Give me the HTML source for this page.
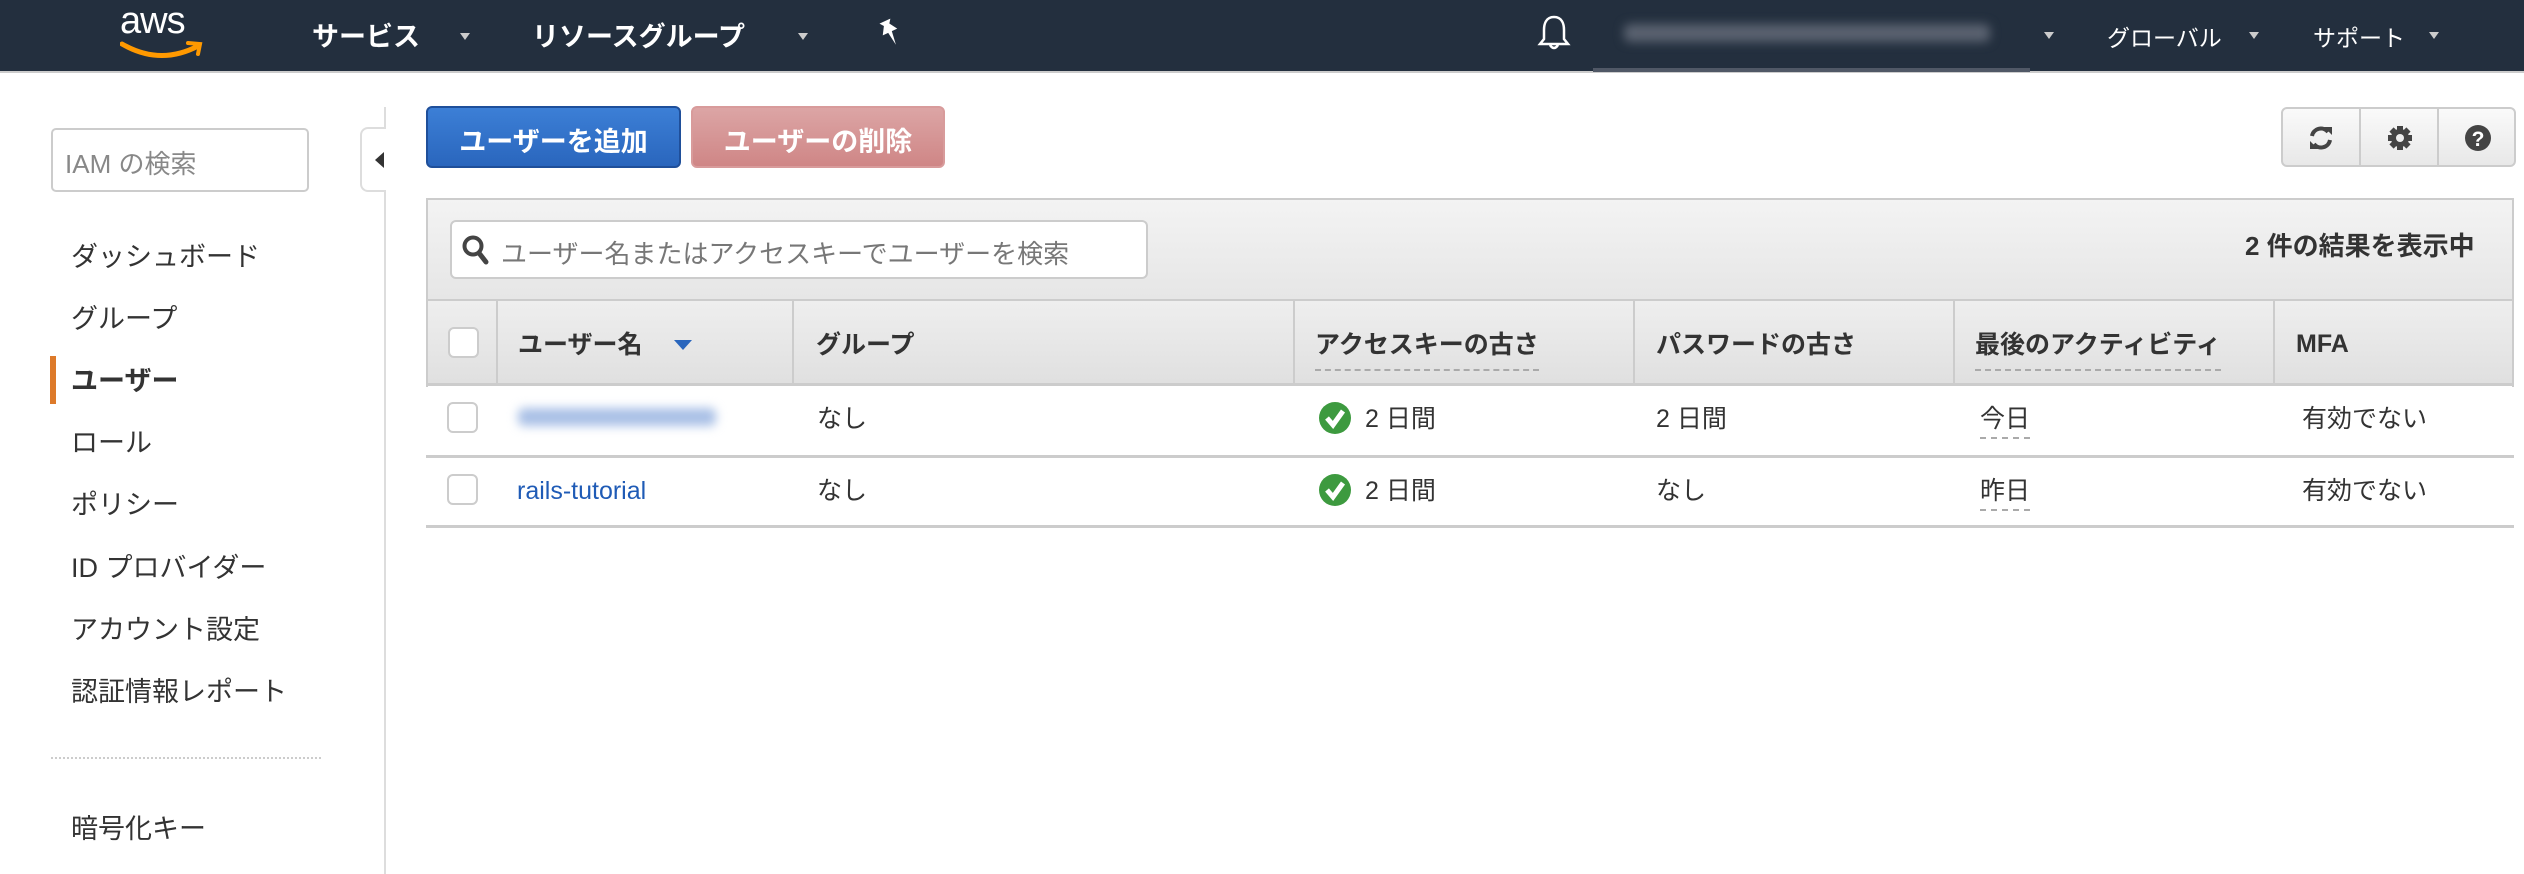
<!DOCTYPE html>
<html><head><meta charset="utf-8"><style>
*{box-sizing:border-box;margin:0;padding:0}
body{width:2524px;height:874px;position:relative;overflow:hidden;background:#fff;font-family:"Liberation Sans","Noto Sans CJK JP",sans-serif;color:#333}
.a{position:absolute;white-space:nowrap}
.nav{left:0;top:0;width:2524px;height:73px;background:#232f3e;border-bottom:2px solid #ccc}
.nt{color:#fff;font-size:27px;font-weight:bold;top:15px}
.nt2{color:#fff;font-size:23px;top:19px}
.car{width:0;height:0;border-left:5px solid transparent;border-right:5px solid transparent;border-top:7px solid #ccc}
.side{font-size:27px;color:#333;left:71px}
.th{font-size:25px;font-weight:bold;color:#333;top:325px}
.td{font-size:25px;color:#333}
.cb{width:31px;height:31px;border:2px solid #ccc;border-radius:6px;background:#fff}
.dot{border-bottom:2px dashed #aaa}
</style></head><body>
<div class="a nav"></div>
<div class="a" style="left:120px;top:0px;color:#fff;font-size:38px;font-family:'Liberation Sans',sans-serif;letter-spacing:-1px">aws</div>
<svg class="a" style="left:120px;top:40px" width="84" height="20"><path d="M2 4 Q40 26 78 6" stroke="#f90" stroke-width="5" fill="none" stroke-linecap="round"/><path d="M68 3 L80 4 L78 14" stroke="#f90" stroke-width="4" fill="none" stroke-linecap="round"/></svg>
<div class="a nt" style="left:312px">サービス</div><div class="a car" style="left:460px;top:33px"></div>
<div class="a nt" style="left:532px">リソースグループ</div><div class="a car" style="left:798px;top:33px"></div>
<svg class="a" style="left:876px;top:18px" width="28" height="30"><path d="M8 2 L20 2 L17 6 L22 14 L16 14 L14 28 L12 14 L6 14 L11 6 Z" fill="#fff" transform="rotate(-25 14 14)"/></svg>
<svg class="a" style="left:1536px;top:14px" width="36" height="38"><path d="M18 3 C10 3 8 10 8 16 L8 25 L4 30 L32 30 L28 25 L28 16 C28 10 26 3 18 3 Z M14 31 Q18 37 22 31" stroke="#fff" stroke-width="2.5" fill="none"/></svg>
<div class="a" style="left:1624px;top:24px;width:366px;height:18px;background:#5a6270;filter:blur(5px);border-radius:6px"></div>
<div class="a" style="left:1593px;top:68px;width:437px;height:4px;background:#505866"></div>
<div class="a car" style="left:2044px;top:32px"></div>
<div class="a nt2" style="left:2107px">グローバル</div><div class="a car" style="left:2249px;top:32px"></div>
<div class="a nt2" style="left:2313px">サポート</div><div class="a car" style="left:2429px;top:32px"></div>

<div class="a" style="left:51px;top:128px;width:258px;height:64px;border:2px solid #ccc;border-radius:5px;font-size:26px;color:#888;padding:14px 0 0 12px">IAM の検索</div>
<div class="a" style="left:384px;top:107px;width:2px;height:767px;background:#ddd"></div>
<div class="a" style="left:360px;top:127px;width:26px;height:65px;border:2px solid #ddd;border-right:none;border-radius:8px 0 0 8px;background:#fff"></div>
<div class="a" style="left:375px;top:152px;width:0;height:0;border-top:8px solid transparent;border-bottom:8px solid transparent;border-right:9px solid #333"></div>
<div class="a side" style="top:235px">ダッシュボード</div>
<div class="a side" style="top:297px">グループ</div>
<div class="a" style="left:50px;top:356px;width:6px;height:48px;background:#dd7a2a"></div>
<div class="a side" style="top:359px;font-weight:bold">ユーザー</div>
<div class="a side" style="top:421px">ロール</div>
<div class="a side" style="top:483px">ポリシー</div>
<div class="a side" style="top:546px">ID プロバイダー</div>
<div class="a side" style="top:608px">アカウント設定</div>
<div class="a side" style="top:670px">認証情報レポート</div>
<div class="a" style="left:51px;top:757px;width:270px;border-top:2px dotted #ccc"></div>
<div class="a side" style="top:807px">暗号化キー</div>

<div class="a" style="left:426px;top:106px;width:255px;height:62px;border:2px solid #1f4f9a;border-radius:6px;background:linear-gradient(#3c7fd6,#2a66bd);color:#fff;font-size:27px;font-weight:bold;text-align:center;padding-top:12px">ユーザーを追加</div>
<div class="a" style="left:691px;top:106px;width:254px;height:62px;border:2px solid #d89b9b;border-radius:6px;background:linear-gradient(#dca5a5,#cf8686);color:#fff;font-size:27px;font-weight:bold;text-align:center;padding-top:12px">ユーザーの削除</div>

<div class="a" style="left:2281px;top:107px;width:235px;height:60px;border:2px solid #ccc;border-radius:6px;background:linear-gradient(#fafafa,#e8e8e8)"></div>
<div class="a" style="left:2359px;top:107px;width:2px;height:60px;background:#ccc"></div>
<div class="a" style="left:2437px;top:107px;width:2px;height:60px;background:#ccc"></div>
<svg class="a" style="left:2306px;top:123px" width="30" height="30"><path d="M6 13 A9 9 0 0 1 22 9 M24 17 A9 9 0 0 1 8 21" stroke="#444" stroke-width="4" fill="none"/><path d="M18 4 L26 4 L26 12 Z M12 26 L4 26 L4 18 Z" fill="#444"/></svg>
<svg class="a" style="left:2385px;top:123px" width="30" height="30"><g fill="#444"><circle cx="15" cy="15" r="9"/><rect x="12" y="3" width="6" height="24"/><rect x="12" y="3" width="6" height="24" transform="rotate(45 15 15)"/><rect x="12" y="3" width="6" height="24" transform="rotate(90 15 15)"/><rect x="12" y="3" width="6" height="24" transform="rotate(135 15 15)"/></g><circle cx="15" cy="15" r="4" fill="#eee"/></svg>
<svg class="a" style="left:2463px;top:123px" width="30" height="30"><circle cx="15" cy="15" r="13" fill="#444"/><text x="15" y="23" font-size="21" font-weight="bold" fill="#fff" text-anchor="middle" font-family="Liberation Sans">?</text></svg>

<div class="a" style="left:426px;top:198px;width:2088px;height:189px;border:2px solid #ccc;border-bottom:none"></div>
<div class="a" style="left:428px;top:200px;width:2084px;height:101px;background:linear-gradient(#f3f3f3,#e6e6e6);border-bottom:2px solid #ccc"></div>
<div class="a" style="left:450px;top:220px;width:698px;height:59px;background:#fff;border:2px solid #ccc;border-radius:6px"></div>
<svg class="a" style="left:461px;top:234px" width="28" height="32"><circle cx="12" cy="12" r="8.5" stroke="#444" stroke-width="4" fill="none"/><path d="M18 19 L25 28" stroke="#444" stroke-width="5" stroke-linecap="round"/></svg>
<div class="a" style="left:501px;top:234px;font-size:26px;color:#777">ユーザー名またはアクセスキーでユーザーを検索</div>
<div class="a" style="left:2245px;top:226px;font-size:26px;font-weight:bold;color:#333">2 件の結果を表示中</div>

<div class="a" style="left:428px;top:301px;width:2084px;height:85px;background:linear-gradient(#eeeeee,#e0e0e0);border-bottom:3px solid #ccc"></div>
<div class="a" style="left:496px;top:301px;width:2px;height:82px;background:#ccc"></div>
<div class="a" style="left:792px;top:301px;width:2px;height:82px;background:#ccc"></div>
<div class="a" style="left:1293px;top:301px;width:2px;height:82px;background:#ccc"></div>
<div class="a" style="left:1633px;top:301px;width:2px;height:82px;background:#ccc"></div>
<div class="a" style="left:1953px;top:301px;width:2px;height:82px;background:#ccc"></div>
<div class="a" style="left:2273px;top:301px;width:2px;height:82px;background:#ccc"></div>
<div class="a cb" style="left:448px;top:327px"></div>
<div class="a th" style="left:518px">ユーザー名</div>
<div class="a" style="left:674px;top:340px;width:0;height:0;border-left:9px solid transparent;border-right:9px solid transparent;border-top:10px solid #2a66bd"></div>
<div class="a th" style="left:816px">グループ</div>
<div class="a th dot" style="left:1315px;padding-bottom:8px">アクセスキーの古さ</div>
<div class="a th" style="left:1656px">パスワードの古さ</div>
<div class="a th dot" style="left:1975px;padding-bottom:8px">最後のアクティビティ</div>
<div class="a th" style="left:2296px;top:330px">MFA</div>

<div class="a" style="left:426px;top:455px;width:2088px;height:3px;background:#ccc"></div>
<div class="a" style="left:426px;top:525px;width:2088px;height:3px;background:#ccc"></div>
<div class="a cb" style="left:447px;top:402px"></div>
<div class="a cb" style="left:447px;top:474px"></div>
<div class="a" style="left:518px;top:408px;width:198px;height:18px;background:#a9c0e6;filter:blur(5px);border-radius:6px"></div>
<div class="a td" style="left:517px;top:477px;color:#1f5bb6">rails-tutorial</div>
<div class="a td" style="left:817px;top:399px">なし</div>
<div class="a td" style="left:817px;top:471px">なし</div>
<svg class="a" style="left:1318px;top:401px" width="34" height="34"><circle cx="17" cy="17" r="16" fill="#3d9a3f"/><path d="M9 17 L15 24 L25 10" stroke="#fff" stroke-width="5" fill="none"/></svg>
<svg class="a" style="left:1318px;top:473px" width="34" height="34"><circle cx="17" cy="17" r="16" fill="#3d9a3f"/><path d="M9 17 L15 24 L25 10" stroke="#fff" stroke-width="5" fill="none"/></svg>
<div class="a td" style="left:1365px;top:399px">2 日間</div>
<div class="a td" style="left:1365px;top:471px">2 日間</div>
<div class="a td" style="left:1656px;top:399px">2 日間</div>
<div class="a td" style="left:1656px;top:471px">なし</div>
<div class="a td dot" style="left:1980px;top:399px;padding-bottom:2px">今日</div>
<div class="a td dot" style="left:1980px;top:471px;padding-bottom:2px">昨日</div>
<div class="a td" style="left:2302px;top:399px">有効でない</div>
<div class="a td" style="left:2302px;top:471px">有効でない</div>
</body></html>
